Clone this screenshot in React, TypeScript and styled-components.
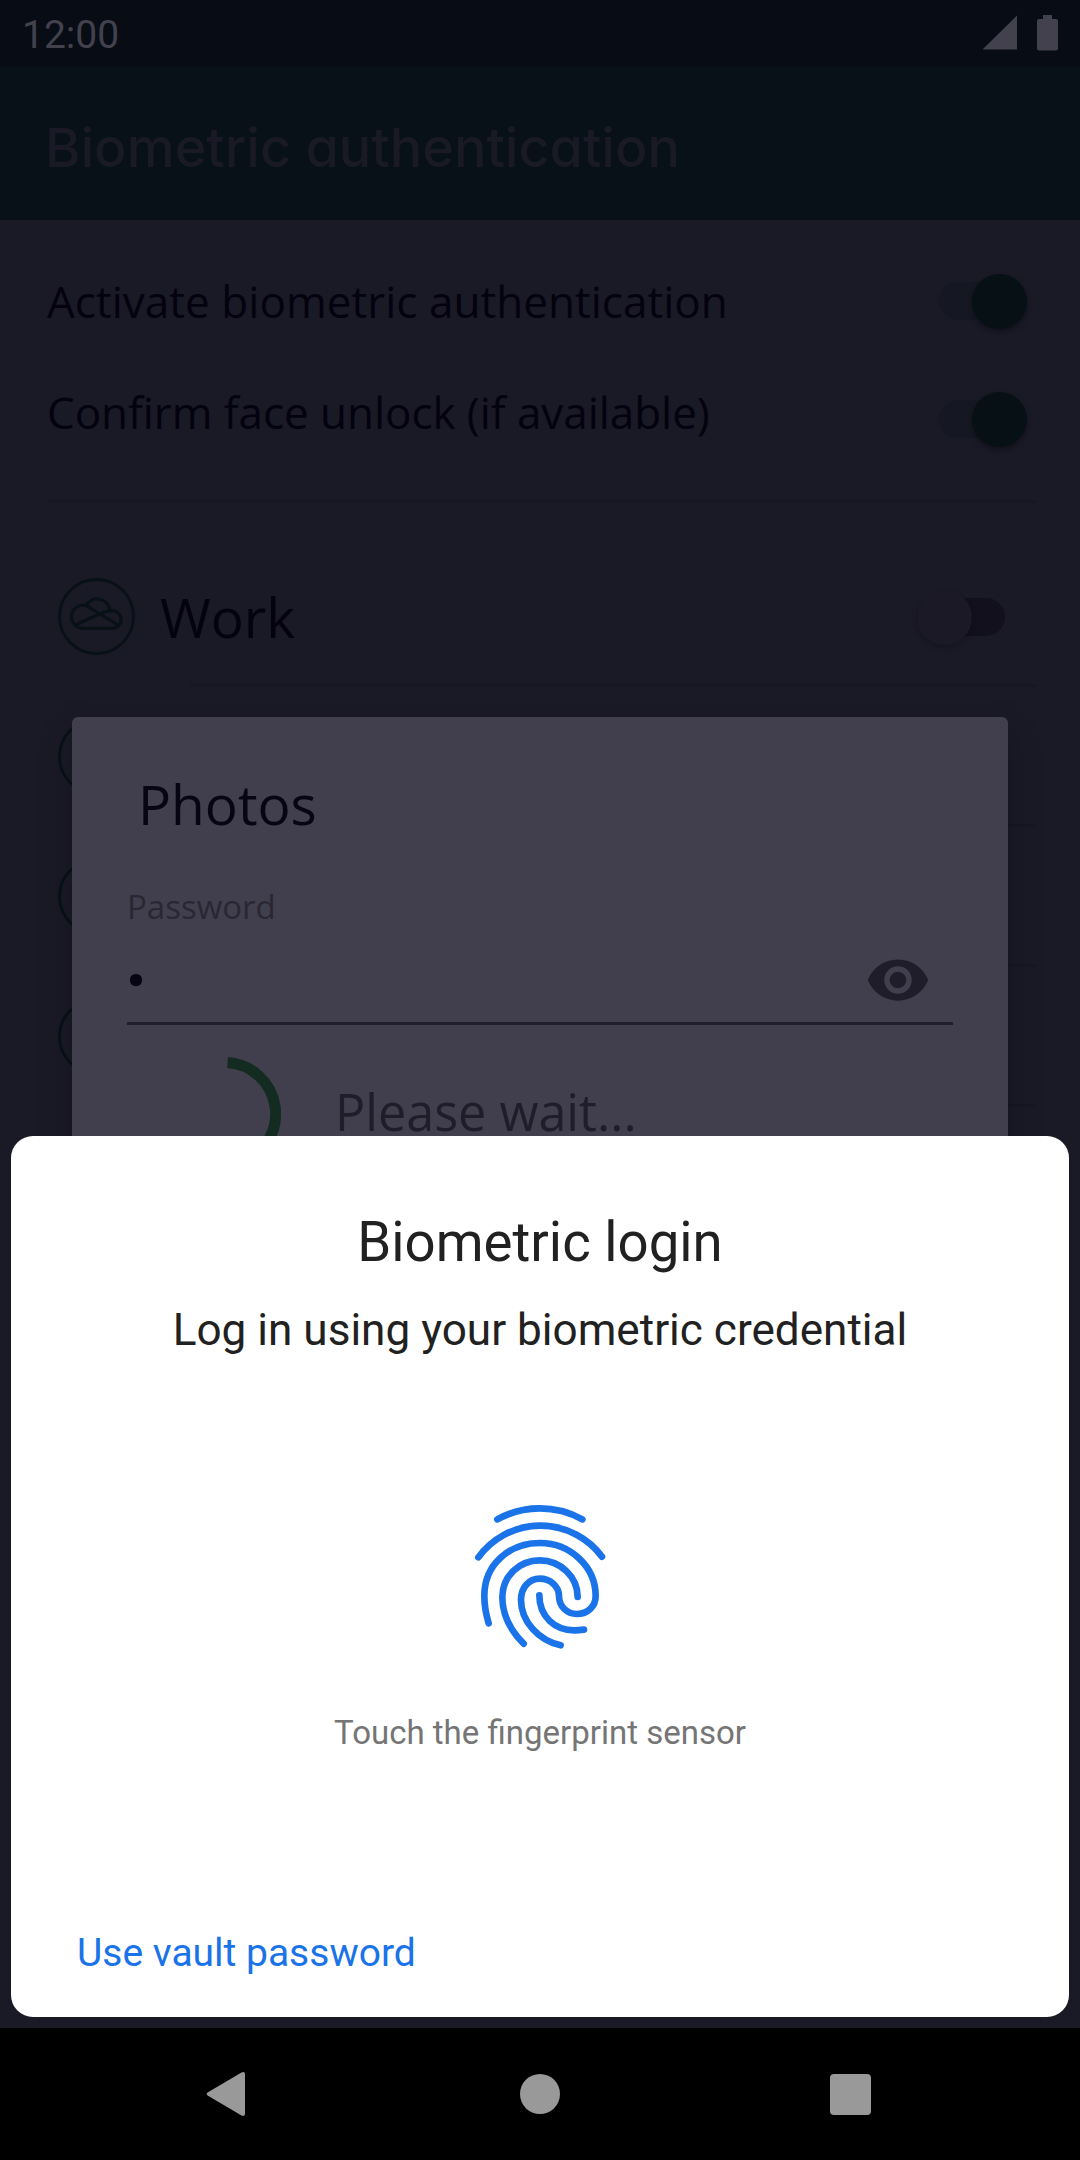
import React from "react";
import styled, { createGlobalStyle } from "styled-components";

const GlobalStyle = createGlobalStyle`
  * { box-sizing: border-box; }
  body { margin: 0; background: #1a1926; }
`;

const body = `"Open Sans", "Noto Sans", sans-serif`;

const Screen = styled.div`
  position: relative;
  width: 1080px;
  height: 2160px;
  overflow: hidden;
  display: flex;
  flex-direction: column;
  background: #1a1926;
  font-family: Roboto, sans-serif;
`;

const StatusBar = styled.div`
  height: 66px;
  padding: 0 21px 0 22px;
  display: flex;
  align-items: center;
  justify-content: space-between;
  background: #070c15;
  color: #43414e;
`;

const Clock = styled.span`
  font-size: 39px;
  line-height: 48px;
  padding-top: 3px;
`;

const StatusIcons = styled.svg`
  width: 76px;
  height: 38px;
`;

const Header = styled.header`
  height: 154px;
  padding: 9px 45px 0;
  display: flex;
  align-items: center;
  background: #081117;
`;

const HeaderTitle = styled.h1`
  margin: 0;
  font-family: Inter, sans-serif;
  font-feature-settings: "cv11";
  font-weight: 500;
  font-size: 54px;
  line-height: 70px;
  white-space: nowrap;
  color: #1a1926;
`;

const Content = styled.main`
  flex: 1;
  padding: 22px 44px 0 47px;
  font-family: ${body};
  color: #04020f;
`;

const SettingRow = styled.div`
  height: 118px;
  display: flex;
  align-items: center;
  justify-content: space-between;
  padding-right: 9px;
`;

const SettingLabel = styled.span<{ $lift?: number; $tracking?: number }>`
  font-size: 44px;
  line-height: 60px;
  letter-spacing: ${(p) => p.$tracking ?? 0}px;
  white-space: nowrap;
  padding-bottom: ${(p) => p.$lift ?? 0}px;
`;

const Rule = styled.hr`
  height: 3px;
  border: 0;
  margin: 22px 0 44px;
  background: #181622;
`;

const SwitchTrack = styled.span<{ $on?: boolean }>`
  width: 88px;
  height: 38px;
  border-radius: 19px;
  display: flex;
  align-items: center;
  justify-content: ${(p) => (p.$on ? "flex-end" : "flex-start")};
  background: ${(p) => (p.$on ? "#151822" : "#12101d")};
`;

const SwitchThumb = styled.span<{ $on?: boolean }>`
  flex: none;
  width: 55px;
  height: 55px;
  border-radius: 50%;
  background: ${(p) => (p.$on ? "#071115" : "#1a1925")};
  box-shadow: 0 3px 5px rgba(8, 6, 18, ${(p) => (p.$on ? 0.4 : 0.25)});
`;

const AccountRow = styled.div`
  height: 140px;
  display: flex;
  align-items: center;
  padding-left: 11px;
  background: linear-gradient(#181622, #181622) 143px 137px / 846px 3px no-repeat;
`;

const AccountIcon = styled.svg`
  width: 77px;
  height: 77px;
  margin-bottom: 2px;
  flex: none;
`;

const AccountName = styled.span`
  flex: 1;
  padding-left: 25px;
  font-size: 55px;
  line-height: 76px;
`;

const AccountSwitch = styled.span`
  padding-right: 31px;
`;

const PasswordDialog = styled.section`
  position: absolute;
  left: 72px;
  top: 717px;
  width: 936px;
  height: 480px;
  padding: 50px 55px 0;
  border-radius: 6px;
  background: #413f4d;
  box-shadow: 0 14px 34px rgba(8, 6, 16, 0.22);
  font-family: ${body};
  color: #070513;
`;

const DialogTitle = styled.h2`
  margin: 0;
  padding-left: 11px;
  font-weight: 400;
  font-size: 55px;
  line-height: 74px;
`;

const FieldLabel = styled.div`
  margin-top: 43px;
  font-size: 33px;
  line-height: 46px;
  color: #292734;
`;

const Field = styled.div`
  height: 95px;
  padding: 0 22px 0 3px;
  display: flex;
  align-items: center;
  justify-content: space-between;
  border-bottom: 3px solid #201e2b;
`;

const MaskedChar = styled.span`
  width: 12px;
  height: 12px;
  margin-top: 8px;
  border-radius: 5.5px;
  background: #070513;
`;

const EyeIcon = styled.svg`
  width: 66px;
  height: 66px;
  margin-top: 8px;
`;

const Progress = styled.div`
  display: flex;
  align-items: flex-start;
  padding: 32px 0 0 40px;
  color: #1f1d2a;
`;

const Spinner = styled.svg`
  width: 114px;
  height: 114px;
`;

const ProgressLabel = styled.span`
  padding: 20px 0 0 54px;
  font-size: 50.3px;
  line-height: 70px;
`;

const Sheet = styled.section`
  position: absolute;
  left: 11px;
  top: 1136px;
  width: 1058px;
  height: 881px;
  padding: 70px 66px 34px;
  border-radius: 22px;
  background: #fff;
  display: flex;
  flex-direction: column;
  align-items: center;
  color: #212121;
`;

const SheetTitle = styled.h2`
  margin: 0;
  font-weight: 400;
  font-size: 54.6px;
  line-height: 72px;
`;

const SheetSubtitle = styled.p`
  margin: 22px 0 0;
  font-size: 44.1px;
  line-height: 60px;
`;

const Fingerprint = styled.svg`
  width: 200px;
  height: 200px;
  margin-top: 110px;
`;

const Hint = styled.p`
  margin: 40px 0 0;
  font-size: 33px;
  line-height: 46px;
  color: #757575;
`;

const TextButton = styled.button`
  align-self: flex-start;
  margin-top: auto;
  padding: 0;
  border: 0;
  background: none;
  font: 400 39px/60px Roboto, sans-serif;
  color: #1a73e8;
`;

const NavBar = styled.nav`
  height: 132px;
  display: grid;
  grid-template-columns: 250px 580px 250px;
  align-items: center;
  background: #000;
`;

const NavIcon = styled.svg<{ $align: string }>`
  width: 48px;
  height: 48px;
  justify-self: ${(p) => p.$align};
  fill: #999;
`;

function Toggle({ on }: { on?: boolean }) {
  return (
    <SwitchTrack $on={on}>
      <SwitchThumb $on={on} />
    </SwitchTrack>
  );
}

function CloudBadge({ children }: { children?: React.ReactNode }) {
  return (
    <AccountIcon viewBox="0 0 77 77" fill="none" stroke="#081116" strokeWidth="2.8">
      <circle cx="38.5" cy="38.5" r="37" />
      {children}
    </AccountIcon>
  );
}

function Cloud() {
  return (
    <g strokeWidth="3.2" strokeLinecap="round" strokeLinejoin="round">
      <path d="M26 50.300H54A8.800 8.800 0 1 0 52 33A12.800 12.800 0 0 0 28 27.500A11.600 11.600 0 1 0 26 50.300Z" />
      <path d="M19.500 46L45 34.500Q48.500 33 52 33M28 27.500Q31 29 34 31L60 47" />
    </g>
  );
}

const accounts = ["Work", "", "", ""];

export default function App() {
  return (
    <Screen>
      <GlobalStyle />
      <StatusBar>
        <Clock>12:00</Clock>
        <StatusIcons viewBox="0 0 76 38" fill="#43414e">
          <path d="M-0.500 35.500L34 1.500V35.500Z" />
          <path d="M60 1H69V5H73Q75 5 75 7V34.500Q75 36.500 73 36.500H56Q54 36.500 54 34.500V7Q54 5 56 5H60Z" />
        </StatusIcons>
      </StatusBar>
      <Header>
        <HeaderTitle>Biometric authentication</HeaderTitle>
      </Header>
      <Content>
        <SettingRow>
          <SettingLabel $tracking={0.04}>Activate biometric authentication</SettingLabel>
          <Toggle on />
        </SettingRow>
        <SettingRow>
          <SettingLabel $lift={14} $tracking={-0.05}>
            Confirm face unlock (if available)
          </SettingLabel>
          <Toggle on />
        </SettingRow>
        <Rule />
        {accounts.map((name, i) => (
          <AccountRow key={i}>
            <CloudBadge>{name && <Cloud />}</CloudBadge>
            <AccountName>{name}</AccountName>
            {name && (
              <AccountSwitch>
                <Toggle />
              </AccountSwitch>
            )}
          </AccountRow>
        ))}
      </Content>
      <NavBar>
        <NavIcon $align="end" viewBox="0 0 48 48">
          <path d="M6 22.300L39.500 2.500Q43 1 43 4.500V43.500Q43 47 39.500 45.500L6 25.700Q3.400 24 6 22.300Z" />
        </NavIcon>
        <NavIcon $align="center" viewBox="0 0 48 48">
          <circle cx="24" cy="24" r="20" />
        </NavIcon>
        <NavIcon $align="start" viewBox="0 0 48 48">
          <rect x="0" y="4" width="41" height="41" rx="4" />
        </NavIcon>
      </NavBar>

      <PasswordDialog>
        <DialogTitle>Photos</DialogTitle>
        <FieldLabel>Password</FieldLabel>
        <Field>
          <MaskedChar />
          <EyeIcon viewBox="0 0 24 24" fill="#1f1d2a">
            <path d="M12 4.500C7 4.500 2.730 7.610 1 12c1.730 4.390 6 7.500 11 7.500s9.270-3.110 11-7.500c-1.730-4.390-6-7.500-11-7.500zM12 17c-2.760 0-5-2.240-5-5s2.240-5 5-5 5 2.240 5 5-2.240 5-5 5zm0-8c-1.660 0-3 1.340-3 3s1.340 3 3 3 3-1.340 3-3-1.340-3-3-3z" />
          </EyeIcon>
        </Field>
        <Progress>
          <Spinner viewBox="0 0 114 114" fill="none" stroke="#132b20" strokeWidth="11">
            <path d="M60.600 5.600A51.500 51.500 0 0 1 76 104.900" />
          </Spinner>
          <ProgressLabel>Please wait...</ProgressLabel>
        </Progress>
      </PasswordDialog>

      <Sheet>
        <SheetTitle>Biometric login</SheetTitle>
        <SheetSubtitle>Log in using your biometric credential</SheetSubtitle>
        <Fingerprint
          viewBox="0 0 600 600"
          fill="none"
          stroke="#1a73e8"
          strokeWidth="20"
          strokeLinecap="round"
        >
          <path d="M172 148A265 265 0 0 1 427 148" />
          <path d="M115 262A230 230 0 0 1 486 260" />
          <path d="M146 460C137 430 133 405 133 378C133 282 209 219 300 219C391 219 467 290 467 378C467 410 442 432 411 432C380 432 357 408 357 378C357 349 331 326 299 326C268 326 243 352 243 390C243 455 297 512 362 526" />
          <path d="M251 521C210 480 187 435 187 382C187 318 238 271 299 271C361 271 413 320 413 381" />
          <path d="M298 376C298 440 345 481 403 481C414 481 424 480 432 479" />
        </Fingerprint>
        <Hint>Touch the fingerprint sensor</Hint>
        <TextButton>Use vault password</TextButton>
      </Sheet>
    </Screen>
  );
}
